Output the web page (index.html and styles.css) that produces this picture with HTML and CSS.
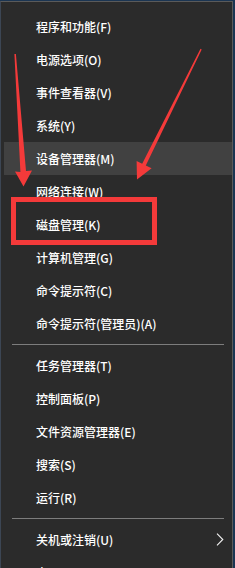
FILE: index.html
```html
<!DOCTYPE html>
<html lang="zh-CN">
<head>
<meta charset="utf-8">
<title>Win+X 菜单</title>
<link rel="stylesheet" href="styles.css">
</head>
<body>
<div class="screen">
  <div class="menu">
    <div class="item">程序和功能(F)</div>
    <div class="item">电源选项(O)</div>
    <div class="item">事件查看器(V)</div>
    <div class="item">系统(Y)</div>
    <div class="item item-hover">设备管理器(M)</div>
    <div class="item">网络连接(W)</div>
    <div class="item">磁盘管理(K)</div>
    <div class="item">计算机管理(G)</div>
    <div class="item">命令提示符(C)</div>
    <div class="item">命令提示符(管理员)(A)</div>
    <div class="sep"></div>
    <div class="item">任务管理器(T)</div>
    <div class="item">控制面板(P)</div>
    <div class="item">文件资源管理器(E)</div>
    <div class="item">搜索(S)</div>
    <div class="item">运行(R)</div>
    <div class="sep"></div>
    <div class="item item-sub"><span>关机或注销(U)</span><svg class="chev" width="8" height="13" viewBox="0 0 8 13"><path d="M1 0.6 L6.8 6.5 L1 12.4" fill="none" stroke="#f2f2f2" stroke-width="1.1"/></svg></div>
    <div class="item">桌面(D)</div>
  </div>
  <div class="mark-box"></div>
  <svg class="arrows" width="235" height="568" viewBox="0 0 235 568">
    <polygon points="14.4,54 15.9,54 26,171 32,170.5 23.5,186.5 15,171.5 20.4,172" fill="#f43a3a"/>
    <polygon points="200.5,48.8 201.7,49.4 145.8,165.5 151.6,168.3 137,179.5 136.6,161 142.2,163.8" fill="#f43a3a"/>
  </svg>
</div>
</body>
</html>
```
FILE: styles.css
```css
html, body {
  margin: 0;
  padding: 0;
}
body {
  background: #1b3552;
  width: 235px;
  height: 568px;
  overflow: hidden;
  font-family: "Noto Sans CJK SC", "Microsoft YaHei", sans-serif;
}
.screen {
  position: relative;
  width: 235px;
  height: 568px;
  overflow: hidden;
}
.menu {
  margin-top: 1px;
  width: 231px;
  border: 1px solid #5a5a5a;
  border-left-color: #3c4654;
  border-bottom: none;
  background: #2b2b2b;
  padding-top: 8px;
  height: 600px;
}
.item {
  height: 33px;
  line-height: 33px;
  margin-left: 3px;
  padding-left: 32px;
  padding-right: 8px;
  font-size: 12px;
  font-weight: 500;
  color: #ffffff;
  white-space: nowrap;
}
.item-hover {
  background: #414141;
}
.item-sub {
  display: flex;
  justify-content: space-between;
  align-items: center;
}
.chev {
  display: block;
}
.sep {
  height: 1px;
  margin: 4px 8px 4px 11px;
  background: #7d7d7d;
}
.mark-box {
  position: absolute;
  left: 11px;
  top: 197px;
  width: 136px;
  height: 38px;
  border: 5px solid #f43a3a;
}
.arrows {
  position: absolute;
  left: 0;
  top: 0;
  pointer-events: none;
}
```
